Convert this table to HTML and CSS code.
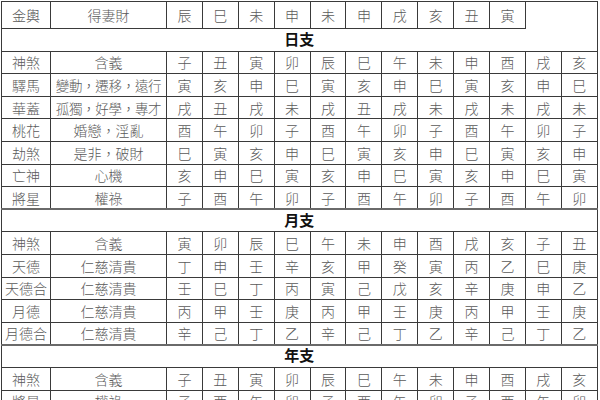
FILE: index.html
```html
<!DOCTYPE html>
<html lang="zh-Hant">
<head>
<meta charset="utf-8">
<link rel="stylesheet" href="styles.css">
</head>
<body>
<table class="shensha">
  <colgroup>
    <col class="c-name"><col class="c-mean">
    <col class="c-v"><col class="c-v"><col class="c-v"><col class="c-v"><col class="c-v"><col class="c-v">
    <col class="c-v"><col class="c-v"><col class="c-v"><col class="c-v"><col class="c-v"><col class="c-v">
  </colgroup>
  <tbody>
    <tr class="first">
      <td>金輿</td><td>得妻財</td>
      <td>辰</td><td>巳</td><td>未</td><td>申</td><td>未</td><td>申</td><td>戌</td><td>亥</td><td>丑</td><td>寅</td>
      <td class="empty"></td><td class="empty"></td>
    </tr>
    <tr class="section first-section"><th colspan="14">日支</th></tr>
    <tr><td>神煞</td><td>含義</td><td>子</td><td>丑</td><td>寅</td><td>卯</td><td>辰</td><td>巳</td><td>午</td><td>未</td><td>申</td><td>酉</td><td>戌</td><td>亥</td></tr>
    <tr><td>驛馬</td><td class="tight">變動，遷移，遠行</td><td>寅</td><td>亥</td><td>申</td><td>巳</td><td>寅</td><td>亥</td><td>申</td><td>巳</td><td>寅</td><td>亥</td><td>申</td><td>巳</td></tr>
    <tr><td>華蓋</td><td class="tight">孤獨，好學，專才</td><td>戌</td><td>丑</td><td>戌</td><td>未</td><td>戌</td><td>丑</td><td>戌</td><td>未</td><td>戌</td><td>未</td><td>戌</td><td>未</td></tr>
    <tr><td>桃花</td><td>婚戀，淫亂</td><td>酉</td><td>午</td><td>卯</td><td>子</td><td>酉</td><td>午</td><td>卯</td><td>子</td><td>酉</td><td>午</td><td>卯</td><td>子</td></tr>
    <tr><td>劫煞</td><td>是非，破財</td><td>巳</td><td>寅</td><td>亥</td><td>申</td><td>巳</td><td>寅</td><td>亥</td><td>申</td><td>巳</td><td>寅</td><td>亥</td><td>申</td></tr>
    <tr><td>亡神</td><td>心機</td><td>亥</td><td>申</td><td>巳</td><td>寅</td><td>亥</td><td>申</td><td>巳</td><td>寅</td><td>亥</td><td>申</td><td>巳</td><td>寅</td></tr>
    <tr><td>將星</td><td>權祿</td><td>子</td><td>酉</td><td>午</td><td>卯</td><td>子</td><td>酉</td><td>午</td><td>卯</td><td>子</td><td>酉</td><td>午</td><td>卯</td></tr>
    <tr class="section"><th colspan="14">月支</th></tr>
    <tr><td>神煞</td><td>含義</td><td>寅</td><td>卯</td><td>辰</td><td>巳</td><td>午</td><td>未</td><td>申</td><td>酉</td><td>戌</td><td>亥</td><td>子</td><td>丑</td></tr>
    <tr><td>天德</td><td>仁慈清貴</td><td>丁</td><td>申</td><td>壬</td><td>辛</td><td>亥</td><td>甲</td><td>癸</td><td>寅</td><td>丙</td><td>乙</td><td>巳</td><td>庚</td></tr>
    <tr><td>天德合</td><td>仁慈清貴</td><td>壬</td><td>巳</td><td>丁</td><td>丙</td><td>寅</td><td>己</td><td>戊</td><td>亥</td><td>辛</td><td>庚</td><td>申</td><td>乙</td></tr>
    <tr><td>月德</td><td>仁慈清貴</td><td>丙</td><td>甲</td><td>壬</td><td>庚</td><td>丙</td><td>甲</td><td>壬</td><td>庚</td><td>丙</td><td>甲</td><td>壬</td><td>庚</td></tr>
    <tr><td>月德合</td><td>仁慈清貴</td><td>辛</td><td>己</td><td>丁</td><td>乙</td><td>辛</td><td>己</td><td>丁</td><td>乙</td><td>辛</td><td>己</td><td>丁</td><td>乙</td></tr>
    <tr class="section"><th colspan="14">年支</th></tr>
    <tr><td>神煞</td><td>含義</td><td>子</td><td>丑</td><td>寅</td><td>卯</td><td>辰</td><td>巳</td><td>午</td><td>未</td><td>申</td><td>酉</td><td>戌</td><td>亥</td></tr>
    <tr><td>將星</td><td>權祿</td><td>子</td><td>酉</td><td>午</td><td>卯</td><td>子</td><td>酉</td><td>午</td><td>卯</td><td>子</td><td>酉</td><td>午</td><td>卯</td></tr>
  </tbody>
</table>
</body>
</html>
```

FILE: styles.css
```css
html, body {
  margin: 0;
  padding: 0;
  background: #ffffff;
  overflow: hidden;
}

body {
  font-family: "Noto Sans CJK TC", "Noto Sans CJK SC", sans-serif;
}

.shensha {
  border-collapse: collapse;
  table-layout: fixed;
  width: 596px;
  margin: 1px 0 0 1px;
  border: 1px solid #3a3a3a;
}

.c-name { width: 49px; }
.c-mean { width: 116px; }
.c-v { width: 35.9px; }

.shensha tr {
  height: 22.6px;
}

.shensha td {
  border: 1px solid #3a3a3a;
  padding: 0;
  text-align: center;
  vertical-align: middle;
  font-size: 14px;
  line-height: 16px;
  font-weight: 300;
  color: #5a5a5a;
  white-space: nowrap;
  overflow: hidden;
}

.shensha td.tight {
  letter-spacing: -0.3px;
  font-size: 13.5px;
}

.shensha tr.first {
  height: 27px;
}

.shensha tr.first td.empty {
  border-top: none;
  border-bottom: none;
  border-left: none;
  border-right: none;
}

.shensha tr.section th {
  border-top: 2px solid #6a6a6a;
  border-bottom: 1px solid #3a3a3a;
  padding: 0 0 2px;
  font-size: 15px;
  line-height: 16px;
  font-weight: 700;
  color: #111111;
  text-align: center;
}

.shensha tr.first-section th {
  border-top: none;
}
```
